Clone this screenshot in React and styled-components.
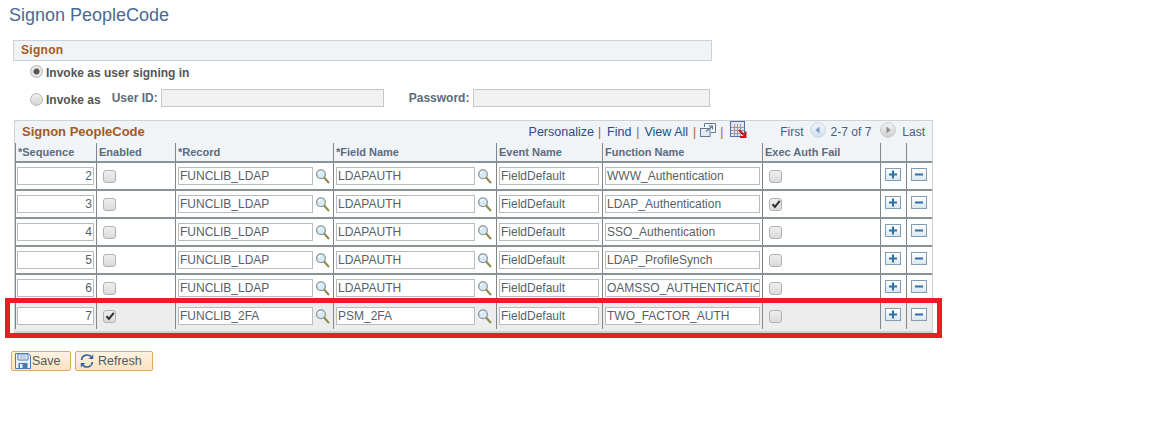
import React from 'react';
import styled, {createGlobalStyle} from 'styled-components';

const Global = createGlobalStyle`
    html, body { margin: 0; padding: 0; background: #fff; }
    body { font-family: "Liberation Sans", Arial, sans-serif; font-size: 12px; color: #4d4d4d; }
`;

const COLUMNS = '81px 79px 158px 163px 106px 160px 118px 26px 26px';

const Page = styled.div`
    position: relative;
    width: 1152px;
    height: 435px;
    overflow: hidden;
`;

const Title = styled.h1`
    margin: 0;
    padding: 5px 0 0 9px;
    height: 40px;
    box-sizing: border-box;
    font-size: 18px;
    line-height: 20px;
    font-weight: normal;
    color: #4a6a94;
`;

const Section = styled.div`
    margin-left: 13px;
    width: 699px;
`;

const SectionBar = styled.div`
    height: 21px;
    box-sizing: border-box;
    padding-left: 7px;
    border: 1px solid #cdd2d6;
    background: #f1f4f6;
    font-size: 12px;
    line-height: 19px;
    font-weight: bold;
    color: #a5591f;
    letter-spacing: 0.3px;
`;

const OptionRow = styled.div`
    display: flex;
    align-items: flex-start;
    height: 26px;
    padding-left: 17px;
`;

const Radio = styled.span`
    width: 11px;
    height: 11px;
    margin-top: ${({$mt}) => $mt}px;
    border: 1px solid #b4b4b4;
    border-radius: 50%;
    background: ${({$on}) => $on
        ? 'radial-gradient(circle, #555 0 2.5px, #e6e6e6 3.5px)'
        : 'linear-gradient(#efefef, #d4d4d4)'};
    flex: none;
`;

const OptionLabel = styled.span`
    margin-left: 3px;
    margin-top: ${({$mt}) => $mt}px;
    font-weight: bold;
    font-size: 12px;
    line-height: 14px;
    color: #555;
`;

const FieldLabel = styled.span`
    margin-left: ${({$ml}) => $ml}px;
    margin-top: 4px;
    font-weight: bold;
    font-size: 12px;
    line-height: 14px;
    color: #5d6b7a;
`;

const ReadonlyField = styled.span`
    margin-left: ${({$ml}) => $ml}px;
    margin-top: 2px;
    width: ${({$w}) => $w}px;
    height: 18px;
    box-sizing: border-box;
    border: 1px solid #c4c8c8;
    background: #f1f1f1;
`;

const Grid = styled.div`
    margin: 7px 0 0 14px;
    width: 919px;
    border: 1px solid #cdd2d6;
    border-bottom: 0;
    box-sizing: border-box;
    background: #f1f4f6;
`;

const GridBar = styled.div`
    display: flex;
    align-items: center;
    height: 22px;
    padding: 0 7px;
`;

const GridTitle = styled.span`
    margin-top: -2px;
    margin-right: auto;
    font-size: 13px;
    font-weight: bold;
    color: #a5591f;
`;

const BarLink = styled.span`
    font-size: 12.5px;
    color: #2c4a86;
`;

const PageText = styled.span`
    margin: ${({$margin}) => $margin};
    font-size: 12px;
    color: #3f5f85;
`;

const Pipe = styled.span`
    margin: 0 ${({$r}) => $r}px 0 ${({$l}) => $l}px;
    color: #a5591f;
    font-size: 12px;
`;

const Row = styled.div`
    display: grid;
    grid-template-columns: ${COLUMNS};
    grid-auto-rows: ${({$head}) => ($head ? 18 : 26)}px;
    border-bottom: 2px solid ${({$last}) => ($last ? '#cdd2d6' : '#8a9296')};
    padding-bottom: ${({$last}) => ($last ? 2 : 0)}px;
    background: ${({$head, $shaded}) => ($head ? '#f1f4f6' : $shaded ? '#ededed' : '#fff')};
`;

const HeadCell = styled.div`
    border-left: 1px solid #7f878c;
    padding-left: 2px;
    font-size: 11px;
    line-height: 19px;
    font-weight: bold;
    color: #5b6b80;
    white-space: nowrap;
`;

const Cell = styled.div`
    display: flex;
    align-items: center;
    box-sizing: border-box;
    border-left: 1px solid #7f878c;
    padding-left: ${({$pl}) => $pl}px;
`;

const Field = styled.span`
    display: block;
    width: ${({$w}) => $w}px;
    height: 18px;
    box-sizing: border-box;
    border: 1px solid #b9bcbc;
    background: #fff;
    padding: 0 1px;
    font-size: 12px;
    line-height: 16px;
    color: #555f68;
    white-space: nowrap;
    overflow: hidden;
    text-align: ${({$right}) => ($right ? 'right' : 'left')};
`;

const Check = styled.span`
    display: flex;
    align-items: center;
    justify-content: center;
    width: 11px;
    height: 11px;
    border: 1px solid #b2b2b2;
    border-radius: 3px;
    background: linear-gradient(#efefef, #dadada);
`;

const SquareButton = styled.span`
    display: flex;
    align-items: center;
    justify-content: center;
    width: 14px;
    height: 11px;
    margin-top: -3px;
    border: 1px solid #7f9db5;
    background: linear-gradient(#ffffff, #dbe7ef);
`;

const Actions = styled.div`
    display: flex;
    gap: 4px;
    margin: 18px 0 0 11px;
`;

const ActionButton = styled.button`
    display: flex;
    align-items: center;
    height: 20px;
    width: ${({$w}) => $w}px;
    box-sizing: border-box;
    padding: 0 0 0 3px;
    border: 1px solid #e0ac5f;
    border-radius: 2px;
    background: linear-gradient(#fdf3e2, #fbe3bd);
    font-family: inherit;
    font-size: 12.5px;
    color: #4f5a66;
`;

const ActionLabel = styled.span`
    margin-left: ${({$ml}) => $ml}px;
`;

// red callout drawn over the last grid row
const Callout = styled.div`
    position: absolute;
    left: 5px;
    top: 298px;
    width: 937px;
    height: 40px;
    box-sizing: border-box;
    border: 5px solid #ed1c24;
    pointer-events: none;
`;

const Magnifier = () => (
    <svg width="15" height="16" viewBox="0 0 15 16" style={{marginLeft: 2, flex: 'none'}}>
        <circle cx="6" cy="6.2" r="4.4" fill="#d5e9f6" stroke="#8d979c" strokeWidth="1.3" />
        <path d="M3.6 6a2.6 2.6 0 0 1 2.4-2.3" stroke="#fff" strokeWidth="1.2" fill="none" />
        <path d="M9.6 10l3.8 4.4" stroke="#8f8a4e" strokeWidth="2.2" strokeLinecap="round" />
    </svg>
);

const Tick = () => (
    <svg width="10" height="10" viewBox="0 0 10 10">
        <path d="M1.5 5.2l2.4 2.6L8.8 1.8" stroke="#333" strokeWidth="2.1" fill="none" />
    </svg>
);

const Plus = () => (
    <svg width="10" height="9" viewBox="0 0 10 9">
        <path d="M1 4.5h8M5 .5v8" stroke="#2f6fa8" strokeWidth="2" />
    </svg>
);

const Minus = () => (
    <svg width="10" height="9" viewBox="0 0 10 9">
        <path d="M1 4.5h8" stroke="#2f6fa8" strokeWidth="2" />
    </svg>
);

const NewWindow = () => (
    <svg width="16" height="15" viewBox="0 0 16 15" style={{marginTop: -4}}>
        <path d="M4.5 4V.5h11v9H11" fill="#f7f9fa" stroke="#5f7a96" />
        <rect x="0.5" y="5.5" width="9.5" height="8" fill="#e6eaee" stroke="#5f7a96" />
        <path d="M6 8.5l6-5M8.5 3h4v3.5" stroke="#5f7a96" strokeWidth="1.2" fill="none" />
    </svg>
);

const DownloadGrid = () => (
    <svg width="17" height="17" viewBox="0 0 17 17" style={{marginTop: -6}}>
        <rect x="0" y="0" width="15" height="3" fill="#4f73b0" />
        <rect x="0.5" y="0.5" width="14" height="15" fill="#e6e3ea" stroke="#4f73b0" />
        <path d="M1 6.5h13M1 9.5h13M1 12.5h13M4.5 3v12M7.5 3v12M10.5 3v12" stroke="#9c97a8" />
        <path d="M9 9l5.2 5.2M15.5 10.5v5.5H10" stroke="#c8141c" strokeWidth="2" fill="none" />
    </svg>
);

const NavArrow = ({dir, from, to, ring, color}) => (
    <svg width="16" height="16" viewBox="0 0 16 16" style={{marginTop: -4}}>
        <defs>
            <linearGradient id={`nav-${dir}`} x1="0" y1="0" x2="0" y2="1">
                <stop offset="0" stopColor={from} />
                <stop offset="1" stopColor={to} />
            </linearGradient>
        </defs>
        <circle cx="8" cy="8" r="7.3" fill={`url(#nav-${dir})`} stroke={ring} />
        <path d={dir === 'left' ? 'M9.5 4.5v7L5.5 8z' : 'M6.5 4.5v7l4-3.5z'} fill={color} />
    </svg>
);

const SaveIcon = () => (
    <svg width="16" height="16" viewBox="0 0 16 16">
        <path d="M.5.5h13l2 2v13H.5z" fill="#e8f0f8" stroke="#4a78b8" />
        <path d="M3 1h10v6H3z" fill="#fff" stroke="#4a78b8" />
        <path d="M4.5 3h7M4.5 5h7" stroke="#7f9fcb" />
        <path d="M3.5 10h9v5.5h-9z" fill="#4a78b8" />
        <path d="M5 11h2.5v4H5z" fill="#e8f0f8" />
    </svg>
);

const RefreshIcon = () => (
    <svg width="16" height="16" viewBox="0 0 16 16">
        <path d="M2.5 7A5.6 5.6 0 0 1 12 3.6" stroke="#2d5f9c" strokeWidth="1.5" fill="none" />
        <path d="M14.2 1.5v4.6H9.8z" fill="#2d5f9c" />
        <path d="M13.5 9A5.6 5.6 0 0 1 4 12.4" stroke="#2d5f9c" strokeWidth="1.5" fill="none" />
        <path d="M1.8 14.5V9.9h4.4z" fill="#2d5f9c" />
    </svg>
);

const rows = [
    {seq: '2', record: 'FUNCLIB_LDAP', field: 'LDAPAUTH', fn: 'WWW_Authentication'},
    {seq: '3', record: 'FUNCLIB_LDAP', field: 'LDAPAUTH', fn: 'LDAP_Authentication', authFail: true},
    {seq: '4', record: 'FUNCLIB_LDAP', field: 'LDAPAUTH', fn: 'SSO_Authentication'},
    {seq: '5', record: 'FUNCLIB_LDAP', field: 'LDAPAUTH', fn: 'LDAP_ProfileSynch'},
    {seq: '6', record: 'FUNCLIB_LDAP', field: 'LDAPAUTH', fn: 'OAMSSO_AUTHENTICATION'},
    {seq: '7', record: 'FUNCLIB_2FA', field: 'PSM_2FA', fn: 'TWO_FACTOR_AUTH', enabled: true},
];

const headers = ['*Sequence', 'Enabled', '*Record', '*Field Name', 'Event Name', 'Function Name', 'Exec Auth Fail', '', ''];

export default function App() {
    return (
        <Page>
            <Global />
            <Title>Signon PeopleCode</Title>

            <Section>
                <SectionBar>Signon</SectionBar>
                <OptionRow>
                    <Radio $on $mt={4} />
                    <OptionLabel $mt={5}>Invoke as user signing in</OptionLabel>
                </OptionRow>
                <OptionRow>
                    <Radio $mt={6} />
                    <OptionLabel $mt={6}>Invoke as</OptionLabel>
                    <FieldLabel $ml={11}>User ID:</FieldLabel>
                    <ReadonlyField $ml={3} $w={223} />
                    <FieldLabel $ml={25}>Password:</FieldLabel>
                    <ReadonlyField $ml={4} $w={237} />
                </OptionRow>
            </Section>

            <Grid>
                <GridBar>
                    <GridTitle>Signon PeopleCode</GridTitle>
                    <BarLink>Personalize</BarLink>
                    <Pipe $l={4} $r={6}>|</Pipe>
                    <BarLink>Find</BarLink>
                    <Pipe $l={5} $r={5}>|</Pipe>
                    <BarLink>View All</BarLink>
                    <Pipe $l={5} $r={4}>|</Pipe>
                    <NewWindow />
                    <Pipe $l={4} $r={7}>|</Pipe>
                    <DownloadGrid />
                    <PageText $margin="0 6px 0 33px">First</PageText>
                    <NavArrow dir="left" from="#f2f7fc" to="#cfdfef" ring="#c6d6e6" color="#7f9cc4" />
                    <PageText $margin="0 9px 0 5px">2-7 of 7</PageText>
                    <NavArrow dir="right" from="#f4f4f4" to="#cfcfcf" ring="#c9c9c9" color="#8a8a8a" />
                    <PageText $margin="0 0 0 6px">Last</PageText>
                </GridBar>

                <Row $head>
                    {headers.map((h, i) => <HeadCell key={i}>{h}</HeadCell>)}
                </Row>

                {rows.map((r, i) => (
                    <Row key={r.seq} $shaded={r.enabled} $last={i === rows.length - 1}>
                        <Cell $pl={1}><Field $w={77} $right>{r.seq}</Field></Cell>
                        <Cell $pl={6}><Check>{r.enabled && <Tick />}</Check></Cell>
                        <Cell $pl={2}><Field $w={135}>{r.record}</Field><Magnifier /></Cell>
                        <Cell $pl={2}><Field $w={139}>{r.field}</Field><Magnifier /></Cell>
                        <Cell $pl={2}><Field $w={100}>FieldDefault</Field></Cell>
                        <Cell $pl={2}><Field $w={155}>{r.fn}</Field></Cell>
                        <Cell $pl={6}><Check>{r.authFail && <Tick />}</Check></Cell>
                        <Cell $pl={4}><SquareButton><Plus /></SquareButton></Cell>
                        <Cell $pl={4}><SquareButton><Minus /></SquareButton></Cell>
                    </Row>
                ))}
            </Grid>

            <Actions>
                <ActionButton $w={60}><SaveIcon /><ActionLabel $ml={1}>Save</ActionLabel></ActionButton>
                <ActionButton $w={78}><RefreshIcon /><ActionLabel $ml={3}>Refresh</ActionLabel></ActionButton>
            </Actions>

            <Callout />
        </Page>
    );
}
